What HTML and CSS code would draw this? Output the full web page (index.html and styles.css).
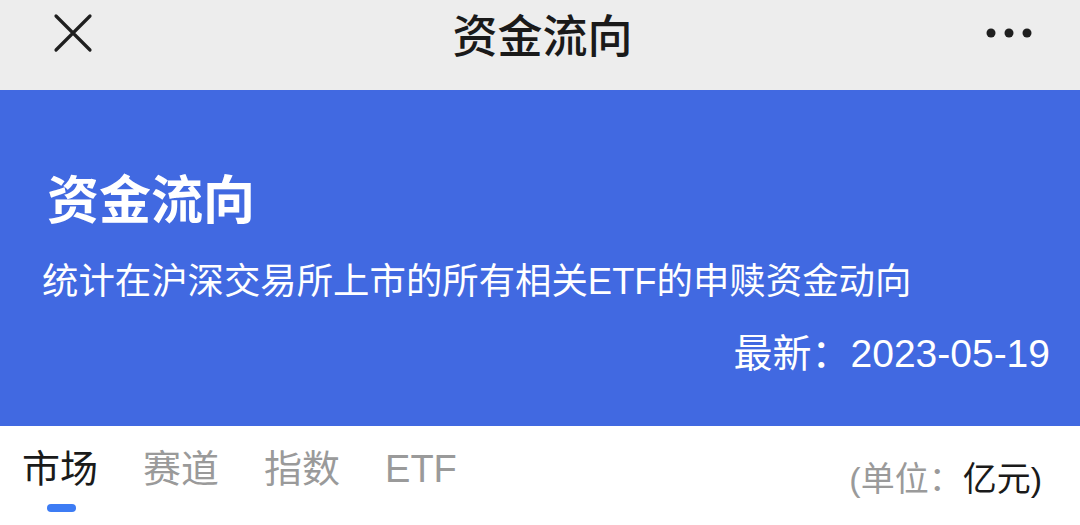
FILE: index.html
```html
<!DOCTYPE html>
<html lang="zh-CN">
<head>
<meta charset="utf-8">
<link rel="stylesheet" href="styles.css">
</head>
<body>
<header class="topbar">
  <div class="close">
    <svg width="40" height="40" viewBox="0 0 40 40"><path d="M3 3 L37 37 M37 3 L3 37" stroke="#1f1f1f" stroke-width="3.2" stroke-linecap="round" fill="none"/></svg>
  </div>
  <div class="top-title">资金流向</div>
  <div class="more">
    <svg width="46" height="12" viewBox="0 0 46 12"><circle cx="5" cy="6" r="4.5" fill="#1f1f1f"/><circle cx="23" cy="6" r="4.5" fill="#1f1f1f"/><circle cx="41" cy="6" r="4.5" fill="#1f1f1f"/></svg>
  </div>
</header>
<section class="banner">
  <h1 class="banner-title">资金流向</h1>
  <p class="banner-sub">统计在沪深交易所上市的所有相关ETF的申赎资金动向</p>
  <p class="banner-date">最新：2023-05-19</p>
</section>
<nav class="tabs">
  <div class="tab-list">
    <div class="tab active">市场<span class="indicator"></span></div>
    <div class="tab">赛道</div>
    <div class="tab">指数</div>
    <div class="tab">ETF</div>
  </div>
  <div class="unit"><span class="unit-label">(单位：</span><span class="unit-value">亿元)</span></div>
</nav>
</body>
</html>
```
FILE: styles.css
```css
html, body {
  margin: 0;
  padding: 0;
  background: #ffffff;
  font-family: "Noto Sans CJK SC", "Noto Sans", sans-serif;
}
.topbar {
  height: 90px;
  background: #ededed;
  display: flex;
  align-items: flex-start;
  justify-content: space-between;
  box-sizing: border-box;
  padding: 0 48px 0 53px;
}
.close, .more, .top-title {
  height: 66px;
  display: flex;
  align-items: center;
}
.close { width: 120px; }
.more { width: 120px; justify-content: flex-end; }
.top-title {
  font-size: 45px;
  font-weight: 500;
  color: #1a1a1a;
  line-height: 1;
}
.banner {
  background: #4169e1;
  color: #ffffff;
  box-sizing: border-box;
  height: 336px;
  padding: 81px 30px 0 42px;
}
.banner-title {
  margin: 0 0 0 5px;
  font-size: 52px;
  line-height: 52px;
  font-weight: 700;
}
.banner-sub {
  margin: 40px 0 0 0;
  font-family: "Liberation Sans", "Noto Sans CJK SC", sans-serif;
  font-size: 36.4px;
  line-height: 37px;
  font-weight: 400;
}
.banner-date {
  margin: 35px 0 0 0;
  font-family: "Liberation Sans", "Noto Sans CJK SC", sans-serif;
  font-size: 39px;
  line-height: 37px;
  text-align: right;
}
.tabs {
  display: flex;
  justify-content: space-between;
  align-items: flex-start;
  padding: 24px 38px 0 22px;
  font-family: "Liberation Sans", "Noto Sans CJK SC", sans-serif;
}
.tab-list {
  display: flex;
  gap: 45px;
}
.tab {
  position: relative;
  font-size: 38px;
  line-height: 38px;
  color: #9a9a9a;
  height: 62px;
}
.tab.active { color: #1a1a1a; }
.indicator {
  position: absolute;
  left: 25px;
  top: 54px;
  width: 29px;
  height: 8px;
  border-radius: 4px;
  background: #3d7cf4;
}
.unit {
  font-size: 34px;
  line-height: 34px;
  margin-top: 12px;
}
.unit-label { color: #9a9a9a; }
.unit-value { color: #1a1a1a; }
```
